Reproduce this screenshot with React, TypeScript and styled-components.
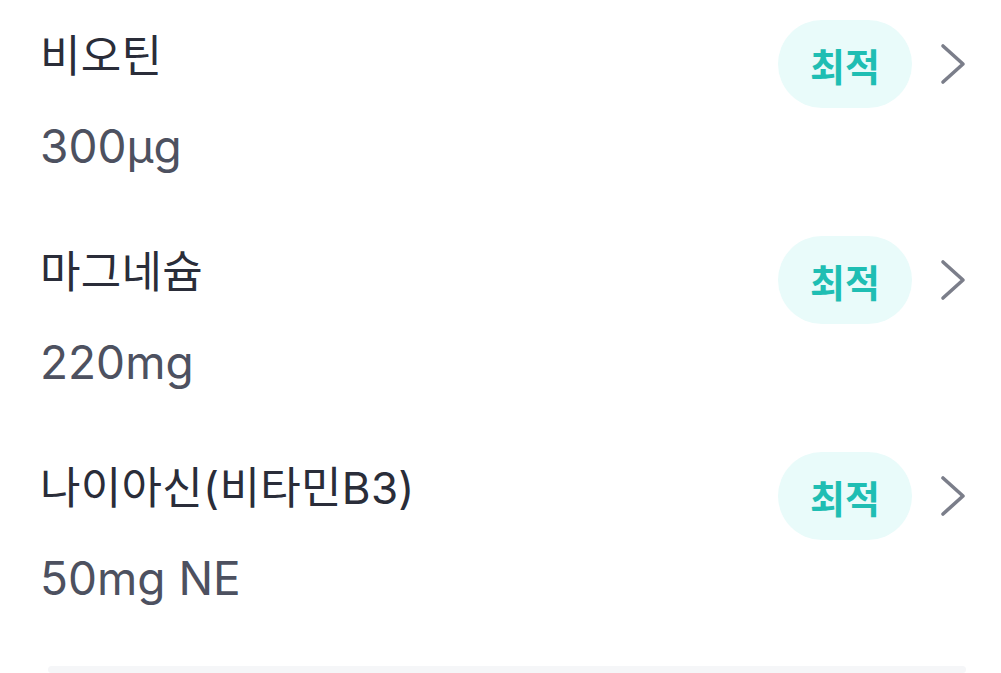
import React from "react";
import styled, { createGlobalStyle } from "styled-components";

const Global = createGlobalStyle`
  html, body { margin: 0; padding: 0; background: #ffffff; }
  body { font-family: Inter, "Noto Sans CJK KR", sans-serif; overflow: hidden; }
`;

const Page = styled.div`
  width: 1001px;
  height: 673px;
  overflow: hidden;
  display: flex;
  flex-direction: column;
`;

const Row = styled.div`
  display: flex;
  justify-content: space-between;
  align-items: flex-start;
  padding: 20px 35px 34px 40px;
`;

const Info = styled.div`
  display: flex;
  flex-direction: column;
  gap: 18px;
`;

const Title = styled.div`
  font-size: 44px;
  line-height: 72px;
  color: #2a2d39;
  letter-spacing: 0.3px;
`;

const Amount = styled.div`
  font-size: 46px;
  line-height: 72px;
  color: #4d5160;
`;

const Actions = styled.div`
  display: flex;
  align-items: center;
  gap: 28px;
`;

const Badge = styled.div`
  width: 134px;
  height: 88px;
  border-radius: 44px;
  background: #e9fbfa;
  color: #1fbeb3;
  font-weight: 700;
  font-size: 38px;
  display: flex;
  align-items: center;
  justify-content: center;
  font-family: "Noto Sans CJK KR", sans-serif;
`;

const Chevron = styled.svg`
  width: 26px;
  height: 44px;
  display: block;
`;

const Footer = styled.div`
  margin: 18px 35px 0 48px;
  height: 80px;
  border-radius: 26px;
  background: #f5f6f8;
`;

const items = [
  { name: "비오틴", amount: "300µg" },
  { name: "마그네슘", amount: "220mg" },
  { name: "나이아신(비타민B3)", amount: "50mg NE" },
];

export default function App() {
  return (
    <Page>
      <Global />
      {items.map((it) => (
        <Row key={it.name}>
          <Info>
            <Title>{it.name}</Title>
            <Amount>{it.amount}</Amount>
          </Info>
          <Actions>
            <Badge>최적</Badge>
            <Chevron viewBox="0 0 26 44">
              <path d="M3 4 L23 22 L3 40" fill="none" stroke="#7b7e8a" strokeWidth="3.6" strokeLinecap="round" strokeLinejoin="round" />
            </Chevron>
          </Actions>
        </Row>
      ))}
      <Footer />
    </Page>
  );
}
